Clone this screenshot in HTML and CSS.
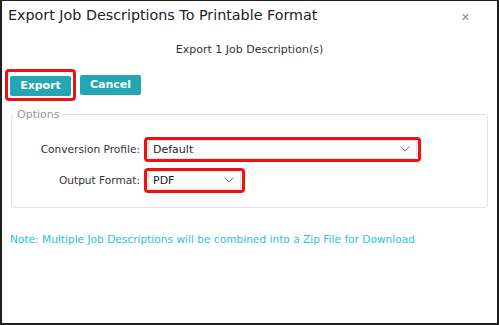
FILE: index.html
```html
<!DOCTYPE html>
<html lang="en">

<head>
    <meta charset="UTF-8">
    <title>Export Job Descriptions</title>
    <link rel="stylesheet" href="styles.css">
</head>

<body>
    <div class="dialog">
        <div class="dialog-header">
            <div class="dialog-title">Export Job Descriptions To Printable Format</div>
            <span class="close">&#x2715;</span>
        </div>
        <div class="subtitle">Export 1 Job Description(s)</div>

        <div class="actions">
            <div class="mark mark-btn"><button type="button" class="btn">Export</button></div>
            <button type="button" class="btn">Cancel</button>
        </div>

        <fieldset class="options">
            <legend>Options</legend>
            <div class="form-row">
                <label for="profile">Conversion Profile:</label>
                <div class="mark mark-wide">
                    <div class="select" id="profile">Default
                        <svg class="chev" width="10" height="6" viewBox="0 0 10 6"><path d="M0.5 0.5 L5 5 L9.5 0.5" fill="none" stroke="#777" stroke-width="1"/></svg>
                    </div>
                </div>
            </div>
            <div class="form-row">
                <label for="format">Output Format:</label>
                <div class="mark mark-small">
                    <div class="select" id="format">PDF
                        <svg class="chev" width="10" height="6" viewBox="0 0 10 6"><path d="M0.5 0.5 L5 5 L9.5 0.5" fill="none" stroke="#777" stroke-width="1"/></svg>
                    </div>
                </div>
            </div>
        </fieldset>

        <p class="note">Note: Multiple Job Descriptions will be combined into a Zip File for Download</p>
    </div>
</body>

</html>
```

FILE: styles.css
```css
body {
    margin: 0;
    padding: 0;
    font-family: "DejaVu Sans", Verdana, sans-serif;
    background-color: #ffffff;
}

.dialog {
    width: 499px;
    height: 325px;
    box-sizing: border-box;
    border: 2px solid #1e1e1e;
    border-top-width: 1px;
    background-color: #ffffff;
    color: #333333;
}

.dialog-header {
    display: flex;
    justify-content: space-between;
    align-items: center;
    padding: 2px 27px 0 6px;
    height: 24px;
}

.dialog-title {
    font-size: 14.3px;
    color: #222222;
}

.close {
    font-size: 11px;
    color: #888888;
    margin-top: 4px;
}

.subtitle {
    text-align: center;
    font-size: 11px;
    margin-top: 16px;
    color: #333333;
}

.actions {
    display: flex;
    align-items: center;
    gap: 4px;
    margin: 13px 0 0 3px;
}

.mark {
    border: 3px solid #ee1111;
    border-radius: 4px;
    box-sizing: border-box;
}

.mark-btn {
    padding: 2px;
}

.btn {
    background-color: #24a6b5;
    color: #ffffff;
    border: none;
    border-radius: 2px;
    width: 61px;
    height: 20px;
    font-family: inherit;
    font-size: 11px;
    font-weight: bold;
    padding: 0;
}

.options {
    margin: 7px 9px 0 9px;
    border: 1px solid #dfe4ea;
    border-radius: 3px;
    padding: 16px 0 14px 0;
}

.options legend {
    font-size: 11px;
    color: #999999;
    padding: 0 3px;
    margin-left: 2px;
}

.form-row {
    display: flex;
    align-items: center;
    margin-bottom: 6px;
}

.form-row:last-child {
    margin-bottom: 0;
}

.form-row label {
    width: 128px;
    text-align: right;
    font-size: 10.6px;
    color: #333333;
    margin-right: 4px;
}

.mark-wide {
    width: 277px;
    padding: 0 1px;
}

.mark-small {
    width: 101px;
    padding: 0 1px;
}

.select {
    display: flex;
    justify-content: space-between;
    align-items: center;
    height: 17px;
    border: 1px solid #e2e2e2;
    border-radius: 2px;
    font-size: 11px;
    color: #222222;
    padding: 0 6px 0 4px;
}

.note {
    margin: 25px 0 0 8px;
    font-size: 10.6px;
    color: #2bc3dc;
}
```
